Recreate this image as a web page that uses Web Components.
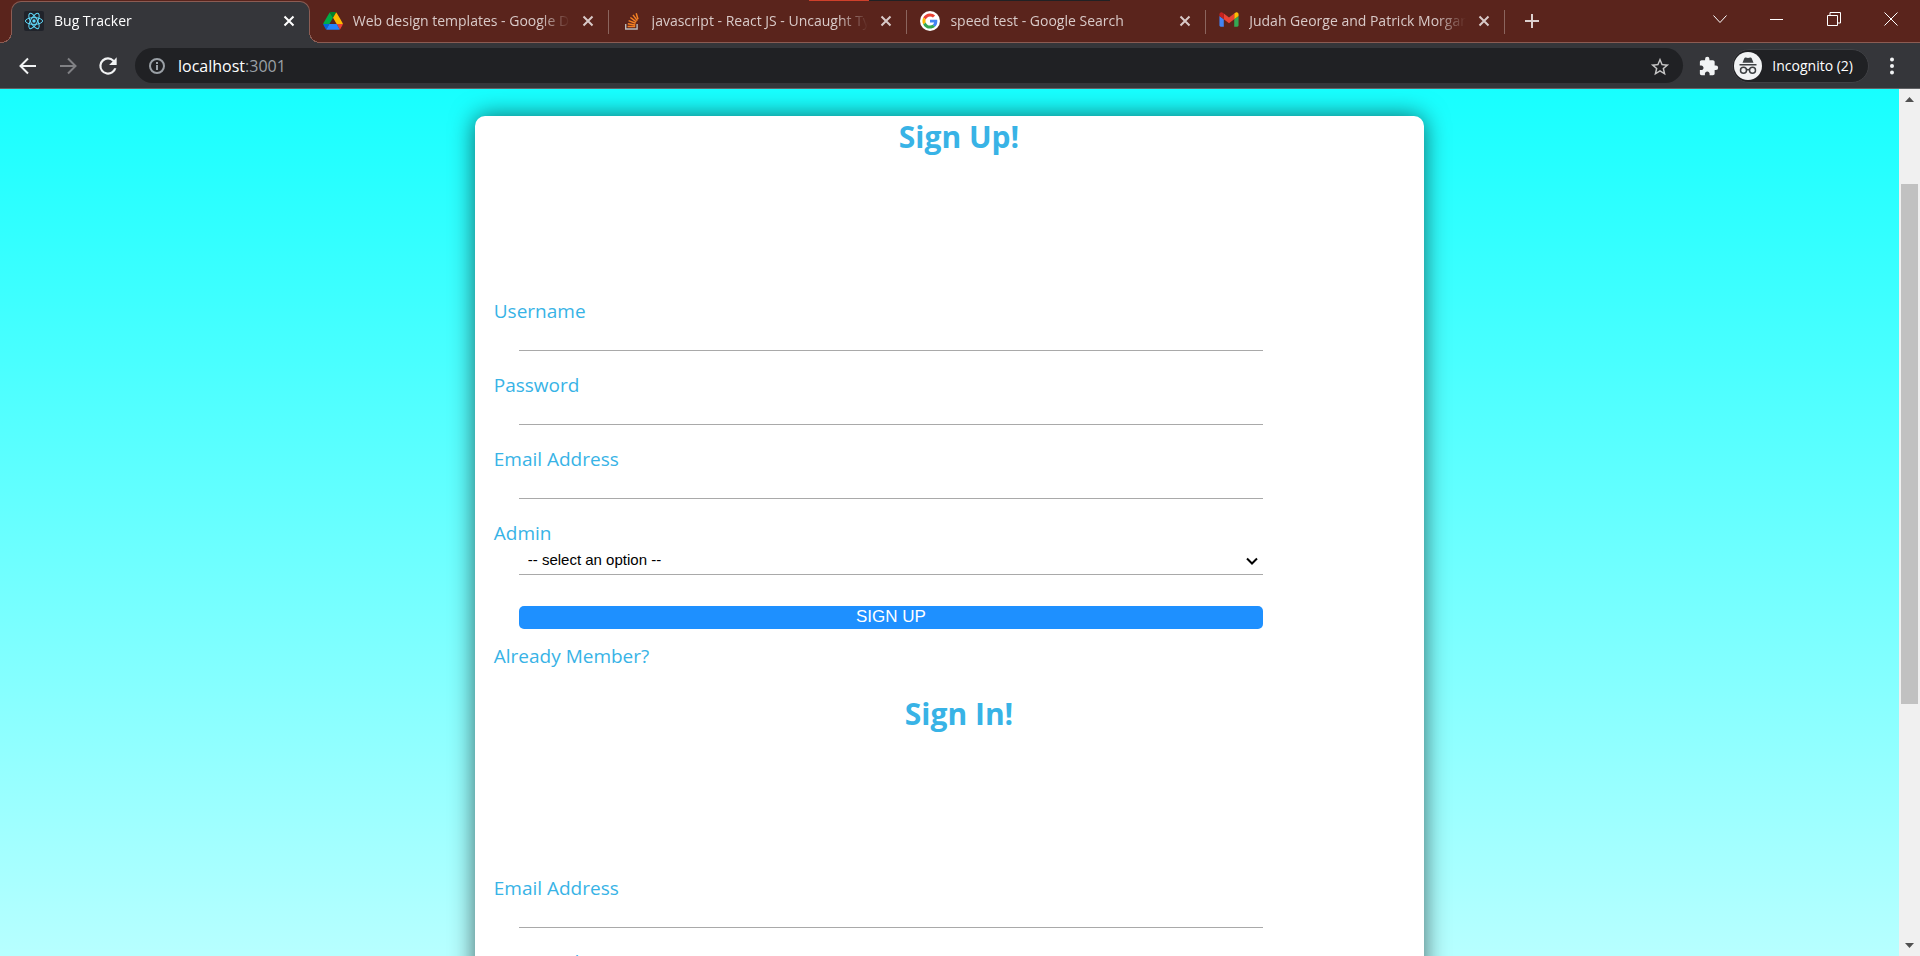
<!DOCTYPE html>
<html lang="en">
<head>
<meta charset="utf-8">
<title>Bug Tracker</title>
<style>
  html, body { margin: 0; height: 100%; }
  body { font-family: "Open Sans", "Noto Sans", sans-serif; overflow: hidden; }
</style>
</head>
<body>
<browser-window>
  <tab-strip slot="tabs">
    <browser-tab active>
      <svg slot="icon" width="20" height="20" viewBox="0 0 20 20"><rect width="20" height="20" rx="2" fill="#20232a"/><g fill="none" stroke="#61dafb" stroke-width="1"><ellipse cx="10" cy="10" rx="8.6" ry="3.4"/><ellipse cx="10" cy="10" rx="8.6" ry="3.4" transform="rotate(60 10 10)"/><ellipse cx="10" cy="10" rx="8.6" ry="3.4" transform="rotate(120 10 10)"/></g><circle cx="10" cy="10" r="1.7" fill="#61dafb"/></svg>
      Bug Tracker
    </browser-tab>
    <browser-tab>
      <svg slot="icon" width="20" height="20" viewBox="-1 -5 89 89"><path fill="#0066da" d="m6.6 66.85 3.85 6.65c.8 1.4 1.95 2.5 3.3 3.3l13.75-23.8h-27.5c0 1.55.4 3.1 1.2 4.5z"/><path fill="#00ac47" d="m43.65 25-13.75-23.8c-1.35.8-2.5 1.9-3.3 3.3l-25.4 44a9.06 9.06 0 0 0-1.2 4.5h27.5z"/><path fill="#ea4335" d="m73.55 76.8c1.35-.8 2.5-1.9 3.3-3.3l1.6-2.75 7.65-13.25c.8-1.4 1.2-2.95 1.2-4.5h-27.502l5.852 11.5z"/><path fill="#00832d" d="m43.65 25 13.75-23.8c-1.35-.8-2.9-1.2-4.5-1.2h-18.5c-1.6 0-3.15.45-4.5 1.2z"/><path fill="#2684fc" d="m59.8 53h-32.3l-13.75 23.8c1.35.8 2.9 1.2 4.5 1.2h50.8c1.6 0 3.15-.45 4.5-1.2z"/><path fill="#ffba00" d="m73.4 26.5-12.7-22c-.8-1.4-1.95-2.5-3.3-3.3l-13.75 23.8 16.15 28h27.45c0-1.55-.4-3.1-1.2-4.5z"/></svg>
      Web design templates - Google Drive
    </browser-tab>
    <browser-tab>
      <svg slot="icon" width="20" height="20" viewBox="0 0 20 20" fill="none"><path d="M3.7 13v5h11.4v-5" stroke="#bcbbbb" stroke-width="1.4"/><path d="M5.600 15.600h7.600M5.800 12.700l7.500 1.200M6.600 9.600l7 2.600M8.400 6.500l5.900 4.300M11 3.900l4.300 5.700M14.200 2.200l1.800 6" stroke="#f48024" stroke-width="1.5"/></svg>
      javascript - React JS - Uncaught TypeError
    </browser-tab>
    <browser-tab>
      <svg slot="icon" width="20" height="20" viewBox="0 0 20 20"><circle cx="10" cy="10" r="10" fill="#fff"/><g transform="translate(2.4 2.4) scale(.317)"><path fill="#EA4335" d="M24 9.5c3.54 0 6.71 1.22 9.21 3.6l6.85-6.85C35.9 2.38 30.47 0 24 0 14.62 0 6.51 5.38 2.56 13.22l7.98 6.19C12.43 13.72 17.74 9.5 24 9.5z"/><path fill="#4285F4" d="M46.98 24.55c0-1.57-.15-3.09-.38-4.55H24v9.02h12.94c-.58 2.96-2.26 5.48-4.78 7.18l7.73 6c4.51-4.18 7.09-10.36 7.09-17.65z"/><path fill="#FBBC05" d="M10.53 28.59c-.48-1.45-.76-2.99-.76-4.59s.27-3.14.76-4.59l-7.98-6.19C.92 16.46 0 20.12 0 24c0 3.88.92 7.54 2.56 10.78l7.97-6.19z"/><path fill="#34A853" d="M24 48c6.48 0 11.93-2.13 15.89-5.81l-7.73-6c-2.15 1.45-4.92 2.3-8.16 2.3-6.26 0-11.57-4.22-13.47-9.91l-7.98 6.19C6.51 42.62 14.62 48 24 48z"/></g></svg>
      speed test - Google Search
    </browser-tab>
    <browser-tab>
      <svg slot="icon" width="20" height="20" viewBox="50 36 92 92"><path fill="#4285f4" d="M58 108h14V74L52 59v43c0 3.32 2.69 6 6 6"/><path fill="#34a853" d="M120 108h14c3.32 0 6-2.69 6-6V59l-20 15"/><path fill="#fbbc04" d="M120 48v26l20-15v-8c0-7.42-8.47-11.65-14.4-7.2"/><path fill="#ea4335" d="M72 74V48l24 18 24-18v26L96 92"/><path fill="#c5221f" d="M52 51v8l20 15V48l-5.600-4.200c-5.940-4.450-14.400-.220-14.400 7.200"/></svg>
      Judah George and Patrick Morgan
    </browser-tab>
  </tab-strip>
  <tool-bar slot="toolbar">Incognito (2)</tool-bar>
  <form-card>
    <card-title>Sign Up!</card-title>
    <text-field>Username</text-field>
    <text-field type="password">Password</text-field>
    <text-field type="email">Email Address</text-field>
    <select-field>Admin</select-field>
    <submit-button>SIGN UP</submit-button>
    <member-note>Already Member?</member-note>
    <card-title>Sign In!</card-title>
    <text-field type="email">Email Address</text-field>
    <text-field type="password">Password</text-field>
  </form-card>
</browser-window>

<script>
const define = (name, html) => {
  const template = document.createElement('template');
  template.innerHTML = html;
  customElements.define(name, class extends HTMLElement {
    constructor() {
      super();
      this.attachShadow({ mode: 'open' }).append(template.content.cloneNode(true));
    }
    connectedCallback() {
      const input = this.shadowRoot.querySelector('input');
      if (input && this.hasAttribute('type')) input.type = this.getAttribute('type');
    }
  });
};

define('browser-window', `
  <style>
    :host { display: flex; flex-direction: column; height: 100vh; }
    .view { flex: 1; min-height: 0; display: flex; }
    main { flex: 1; min-width: 0; overflow: hidden; padding-top: 27px; box-sizing: border-box;
      background: linear-gradient(#17ffff, #b7ffff); }
  </style>
  <slot name="tabs"></slot>
  <slot name="toolbar"></slot>
  <div class="view">
    <main><slot></slot></main>
    <scroll-bar></scroll-bar>
  </div>`);

define('tab-strip', `
  <style>
    :host { display: flex; position: relative; height: 42px; padding: 0 1px 0 11px; background: #5a241c;
      border-bottom: 1px solid #8b5c53; }
    .accent { position: absolute; top: 0; left: 809px; width: 301px; height: 1px;
      background: linear-gradient(90deg, #d0402b 20%, #202124 20%); }
    .tabs { display: flex; min-width: 0; flex: 0 1 1494px; }
    button { border: 0; padding: 0; background: none; display: grid; place-items: center; color: #fff; }
    .new { width: 32px; margin-left: 11px; height: 42px; color: #dcd0ce; }
    .window { display: flex; margin-left: auto; }
    .window button { width: 57px; height: 37px; }
    svg { fill: none; stroke: currentColor; display: block; }
  </style>
  <div class="accent"></div>
  <div class="tabs"><slot></slot></div>
  <button class="new" aria-label="New tab"><svg width="16" height="16" stroke-width="2"><path d="M8 1v14M1 8h14"/></svg></button>
  <div class="window">
    <button aria-label="Search tabs"><svg width="14" height="14"><path d="M.5 3.500 7 10.500 13.500 3.500"/></svg></button>
    <button aria-label="Minimize"><svg width="14" height="14"><path d="M0 7.500h13"/></svg></button>
    <button aria-label="Restore"><svg width="14" height="14"><path d="M.5 3.500h10v10H.5zM3 3.500V.5h10.500V11H11"/></svg></button>
    <button aria-label="Close"><svg width="14" height="14"><path d="M.5.5l13 13M13.500.5l-13 13"/></svg></button>
  </div>`);

define('browser-tab', `
  <style>
    :host { display: flex; position: relative; align-items: center; gap: 10px; flex: 1 1 0; min-width: 0; box-sizing: border-box;
      height: 42px; padding: 0 13px; color: #d9cac8; font-size: 14px; line-height: 20px; }
    :host(:not([active]))::after { content: ""; position: absolute; right: 0; top: 10px; height: 24px; width: 1px; background: #8b655e; }
    :host([active]) { height: 42px; margin-top: 1px; color: #fff; background: #35363a; padding: 0 12px 3px 12px; z-index: 1;
      border: 1px solid #8b5c53; border-bottom: 0; border-radius: 10px 10px 0 0; }
    :host([active])::before, :host([active])::after { content: ""; position: absolute; bottom: 0; width: 11px; height: 11px; }
    :host([active])::before { right: 100%; background: radial-gradient(circle at 0 0, transparent 10px, #8b5c53 10px 11px, #35363a 11px); }
    :host([active])::after { left: 100%; background: radial-gradient(circle at 100% 0, transparent 10px, #8b5c53 10px 11px, #35363a 11px); }
    ::slotted(svg) { display: block; }
    .title { flex: 1; min-width: 0; overflow: hidden; white-space: nowrap;
      mask-image: linear-gradient(90deg, #000 calc(100% - 30px), transparent); }
    button { border: 0; padding: 0; width: 16px; height: 16px; background: none; color: inherit; display: grid; place-items: center; }
  </style>
  <slot name="icon"></slot>
  <span class="title"><slot></slot></span>
  <button aria-label="Close tab"><svg width="12" height="12" fill="none" stroke="currentColor" stroke-width="2"><path d="M1.500 1.500l9 9M10.500 1.500l-9 9"/></svg></button>`);

define('tool-bar', `
  <style>
    :host { display: flex; align-items: center; height: 45px; background: #35363a; border-bottom: 1px solid #626366;
      padding: 0 13px 0 8px; color: #fff; }
    button { border: 0; padding: 0; width: 40px; height: 40px; background: none; color: #f1f3f4; display: grid; place-items: center; }
    button:disabled { color: #808184; }
    .address { flex: 1; display: flex; align-items: center; gap: 13px; height: 35px; margin: 0 7px; padding: 0 14px 0 14px;
      border-radius: 18px; background: #202124; color: #9aa0a6; font-size: 16px; line-height: 24px; }
    .url { flex: 1; outline: 0; } .url b { font-weight: 400; color: #fff; }
    .address button { width: 20px; height: 20px; color: #c6c6c6; }
    .profile { display: flex; width: auto; height: 34px; gap: 10px; padding: 0 15px 0 1px; border: 1px solid #3f4044; border-radius: 17px; background: #202124;
      color: #fff; font: inherit; font-size: 14px; align-items: center; margin-left: 4px; }
    .more { width: 30px; margin-left: 8px; }
    .ext { width: 38px; }
    svg { display: block; }
  </style>
  <button aria-label="Back"><svg width="18" height="18" fill="none" stroke="currentColor" stroke-width="2"><path d="M17 9H2M9 1.500 1.500 9 9 16.500"/></svg></button>
  <button aria-label="Forward" disabled><svg width="18" height="18" fill="none" stroke="currentColor" stroke-width="2"><path d="M1 9h15M9 1.500 16.500 9 9 16.500"/></svg></button>
  <button aria-label="Reload"><svg width="26" height="26" viewBox="0 0 24 24" fill="currentColor"><path d="M17.650 6.350A7.960 7.960 0 0 0 12 4a8 8 0 1 0 7.730 10h-2.080A6 6 0 1 1 12 6c1.660 0 3.140.690 4.220 1.780L13 11h7V4z"/></svg></button>
  <div class="address">
    <svg width="16" height="16" fill="none" stroke="currentColor" stroke-width="2"><circle cx="8" cy="8" r="7"/><path d="M8 7v5M8 4v2"/></svg>
    <span class="url" role="textbox" aria-label="Address" tabindex="0"><b>localhost</b>:3001</span>
    <button aria-label="Bookmark"><svg width="22" height="22" viewBox="0 0 24 24" fill="currentColor"><path d="M22 9.240l-7.190-.620L12 2 9.190 8.630 2 9.240l5.460 4.730L5.820 21 12 17.270 18.180 21l-1.630-7.030zM12 15.400l-3.760 2.270 1-4.280-3.320-2.880 4.380-.380L12 6.100l1.710 4.040 4.380.380-3.320 2.880 1 4.280z"/></svg></button>
  </div>
  <button class="ext" aria-label="Extensions"><svg width="20" height="20" viewBox="1 0 23 23" fill="currentColor"><path d="M20.500 11H19V7c0-1.100-.9-2-2-2h-4V3.500a2.500 2.500 0 0 0-5 0V5H4c-1.100 0-1.990.9-1.990 2v3.800H3.500c1.490 0 2.700 1.210 2.700 2.700s-1.210 2.700-2.700 2.700H2V20c0 1.100.9 2 2 2h3.800v-1.500c0-1.490 1.210-2.700 2.700-2.700s2.700 1.210 2.700 2.700V22H17c1.100 0 2-.9 2-2v-4h1.500a2.500 2.500 0 0 0 0-5z"/></svg></button>
  <button class="profile"><svg width="28" height="28"><circle cx="14" cy="14" r="14" fill="#f1f3f4"/><g fill="#3c4043"><path d="M5.500 12h17v1.500h-17zM8.500 10.800 10.300 6.200c.3-.7.900-.9 1.500-.7l2.200.6 2.200-.6c.6-.2 1.200 0 1.500.7l1.800 4.600z"/></g><g fill="none" stroke="#3c4043" stroke-width="1.500"><circle cx="9.500" cy="18.300" r="3"/><circle cx="18.500" cy="18.300" r="3"/><path d="M12.500 18c1-.6 2-.6 3 0"/></g></svg><slot></slot></button>
  <button class="more" aria-label="Menu"><svg width="4" height="18" fill="currentColor"><circle cx="2" cy="2.500" r="2"/><circle cx="2" cy="9" r="2"/><circle cx="2" cy="15.500" r="2"/></svg></button>`);

define('scroll-bar', `
  <style>
    :host { display: flex; flex-direction: column; width: 21px; background: #f0f0f0; }
    button { border: 0; padding: 0; height: 21px; background: none; display: grid; place-items: center; }
    .before { flex: 74; } .thumb { flex: 520; margin: 0 2px; background: #c1c1c1; } .after { flex: 231; }
    svg { display: block; }
  </style>
  <button aria-label="Scroll up"><svg width="9" height="5" fill="#505050"><path d="M0 5 4.500 0 9 5z"/></svg></button>
  <div class="before"></div><div class="thumb"></div><div class="after"></div>
  <button aria-label="Scroll down"><svg width="9" height="5" fill="#505050"><path d="M0 0 4.500 5 9 0z"/></svg></button>`);

define('form-card', `
  <style>
    :host { display: block; box-sizing: border-box; width: 50%; margin: 0 auto; padding: 0 0 60px 19px; border-radius: 10px;
      background: #fff; color: #38b3e6; font-size: 19px; line-height: 27px; box-shadow: 0 0 25px rgba(0, 0, 0, .6); }
  </style>
  <slot></slot>`);

define('card-title', `
  <style>
    :host { display: block; margin-bottom: 140px; }
    h1 { margin: 0; font-size: 30px; line-height: 42px; font-weight: 700; text-align: center; }
  </style>
  <h1><slot></slot></h1>`);

define('text-field', `
  <style>
    :host { display: block; margin-bottom: 21px; }
    label { display: block; }
    input { display: block; box-sizing: border-box; width: 80%; height: 26px; margin: 0 0 0 25px; padding: 0 8px; border: 0;
      border-bottom: 1px solid #a9a9a9; background: none; font: 15px "Liberation Sans", Arial, sans-serif; outline: 0; }
  </style>
  <label for="field"><slot></slot></label>
  <input id="field">`);

define('select-field', `
  <style>
    :host { display: block; margin-bottom: 31px; }
    label { display: block; }
    .box { display: grid; align-items: center; width: 80%; height: 27px; margin-left: 25px; border-bottom: 1px solid #a9a9a9; }
    select, svg { grid-area: 1 / 1; }
    select { appearance: none; width: 100%; height: 27px; border: 0; padding: 0 9px 2px; background: none; color: #000;
      font: 15px "Liberation Sans", Arial, sans-serif; }
    svg { justify-self: end; margin-right: 5px; pointer-events: none; }
  </style>
  <label for="field"><slot></slot></label>
  <div class="box">
    <select id="field"><option>-- select an option --</option><option>Yes</option><option>No</option></select>
    <svg width="12" height="8" fill="none" stroke="#000" stroke-width="2"><path d="M1 1.500 6 6.500 11 1.500"/></svg>
  </div>`);

define('submit-button', `
  <style>
    :host { display: block; margin-bottom: 14px; }
    button { display: block; width: 80%; height: 23px; margin-left: 25px; padding: 0 0 2px; border: 0; border-radius: 5px;
      background: #1e90ff; color: #fff; font: 17px/20px "Liberation Sans", Arial, sans-serif; }
  </style>
  <button type="submit"><slot></slot></button>`);

define('member-note', `
  <style>
    :host { display: block; margin-bottom: 23px; }
    p { margin: 0; }
  </style>
  <p><slot></slot></p>`);
</script>
</body>
</html>
